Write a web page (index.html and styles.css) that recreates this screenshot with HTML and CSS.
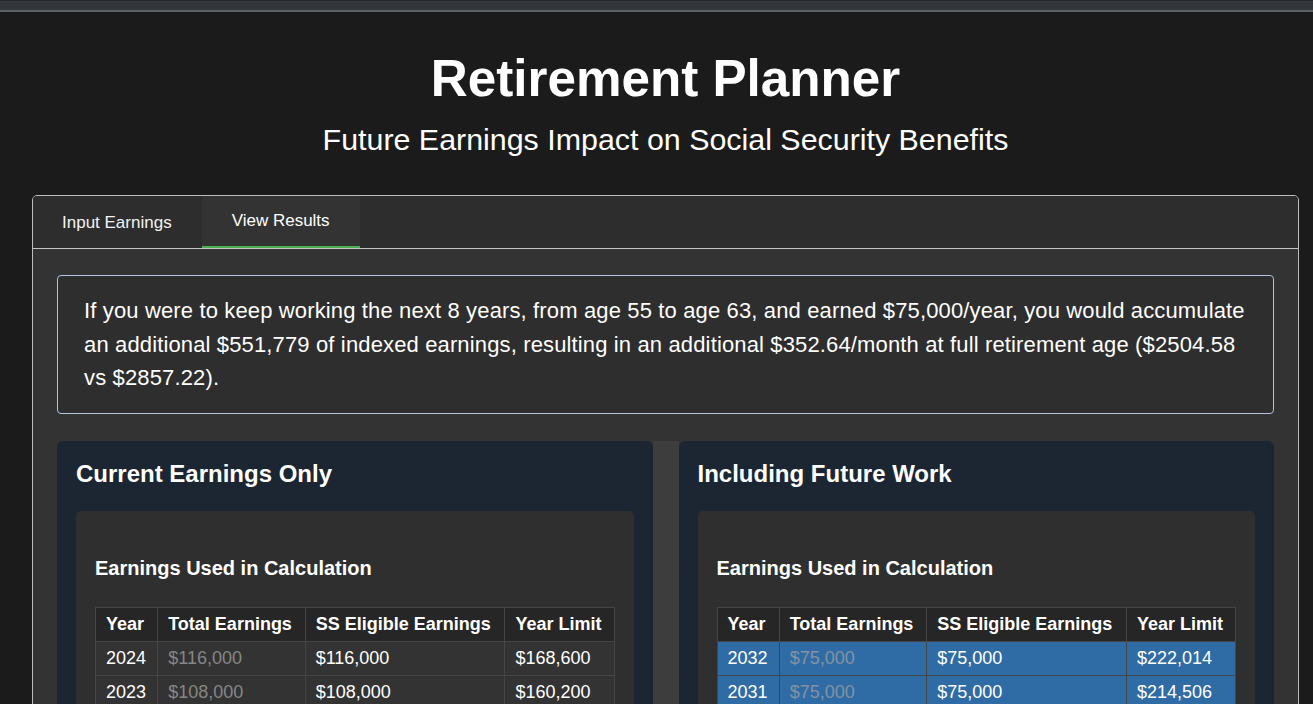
FILE: index.html
```html
<!DOCTYPE html>
<html lang="en">
<head>
<meta charset="utf-8">
<title>Retirement Planner</title>
<link rel="stylesheet" href="styles.css">
</head>
<body>
<div class="topbar"></div>
<main class="page">
  <h1 class="title">Retirement Planner</h1>
  <p class="subtitle">Future Earnings Impact on Social Security Benefits</p>

  <section class="panel">
    <nav class="tabs">
      <div class="tab">Input Earnings</div>
      <div class="tab active">View Results</div>
    </nav>
    <div class="panel-body">
      <div class="summary">If you were to keep working the next 8 years, from age 55 to age 63, and earned $75,000/year, you would accumulate an additional $551,779 of indexed earnings, resulting in an additional $352.64/month at full retirement age ($2504.58 vs $2857.22).</div>

      <div class="results">
        <div class="card">
          <h3 class="card-title">Current Earnings Only</h3>
          <div class="card-inner">
            <h4 class="section-title">Earnings Used in Calculation</h4>
            <table class="earnings">
              <thead>
                <tr><th>Year</th><th>Total Earnings</th><th>SS Eligible Earnings</th><th>Year Limit</th></tr>
              </thead>
              <tbody>
                <tr><td>2024</td><td class="muted">$116,000</td><td>$116,000</td><td>$168,600</td></tr>
                <tr><td>2023</td><td class="muted">$108,000</td><td>$108,000</td><td>$160,200</td></tr>
                <tr><td>2022</td><td class="muted">$102,000</td><td>$102,000</td><td>$147,000</td></tr>
                <tr><td>2021</td><td class="muted">$98,000</td><td>$98,000</td><td>$142,800</td></tr>
              </tbody>
            </table>
          </div>
        </div>
        <div class="divider"></div>
        <div class="card">
          <h3 class="card-title">Including Future Work</h3>
          <div class="card-inner">
            <h4 class="section-title">Earnings Used in Calculation</h4>
            <table class="earnings">
              <thead>
                <tr><th>Year</th><th>Total Earnings</th><th>SS Eligible Earnings</th><th>Year Limit</th></tr>
              </thead>
              <tbody>
                <tr class="future"><td>2032</td><td class="muted">$75,000</td><td>$75,000</td><td>$222,014</td></tr>
                <tr class="future"><td>2031</td><td class="muted">$75,000</td><td>$75,000</td><td>$214,506</td></tr>
                <tr class="future"><td>2030</td><td class="muted">$75,000</td><td>$75,000</td><td>$207,252</td></tr>
                <tr class="future"><td>2029</td><td class="muted">$75,000</td><td>$75,000</td><td>$200,243</td></tr>
              </tbody>
            </table>
          </div>
        </div>
      </div>
    </div>
  </section>
</main>
</body>
</html>
```

FILE: styles.css
```css
* { box-sizing: border-box; }

html, body {
  margin: 0;
  padding: 0;
  background: #1b1b1b;
  color: #ffffff;
  font-family: "Liberation Sans", Arial, sans-serif;
}

.topbar {
  height: 12px;
  background: #33373b;
  border-top: 1px solid #25282c;
  border-bottom: 2px solid #5d5f61;
}

.page {
  margin: 0 14px 0 32px;
  padding-bottom: 40px;
}

.title {
  margin: 37px 0 14px;
  font-size: 51.2px;
  line-height: 59px;
  font-weight: bold;
  text-align: center;
}

.subtitle {
  margin: 0 0 38px;
  font-size: 30.4px;
  line-height: 35px;
  text-align: center;
}

.panel {
  border: 1px solid #bdbdbd;
  border-radius: 5px;
  background: #333333;
  overflow: hidden;
}

.tabs {
  display: flex;
  height: 53px;
  background: #2d2d2d;
  border-bottom: 1px solid #c4c4c4;
}

.tab {
  display: flex;
  align-items: center;
  height: 52px;
  padding: 2px 30px 0 29px;
  font-size: 17px;
  color: #f2f2f2;
}

.tab.active {
  background: #333333;
  color: #ffffff;
  padding: 0 30px 0 30px;
  border-bottom: 2px solid #4caf50;
}

.panel-body {
  padding: 26px 24px 40px;
}

.summary {
  border: 1px solid #b3c3e0;
  border-radius: 4px;
  background: #2e2e2e;
  padding: 18px 20px 18px 26px;
  font-size: 22px;
  line-height: 33.5px;
  letter-spacing: 0.14px;
}

.results {
  display: grid;
  grid-template-columns: 1fr 26px 1fr;
  margin-top: 27px;
}

.divider {
  background: #3d3d3d;
}

.card {
  background: #1c2632;
  border-radius: 6px;
  padding: 19px 19px 30px;
}

.card-title {
  margin: 0;
  font-size: 24px;
  line-height: 28px;
  font-weight: bold;
}

.card-inner {
  margin-top: 23px;
  background: #2f2f2f;
  border-radius: 5px;
  padding: 19px 19px 24px;
}

.section-title {
  margin: 27px 0 27px;
  font-size: 20px;
  line-height: 23px;
  font-weight: bold;
}

.earnings {
  width: 100%;
  border-collapse: collapse;
  font-size: 18px;
  border: 1px solid #454545;
}

.earnings th,
.earnings td {
  border: 1px solid #454545;
  padding: 6px 10px;
  text-align: left;
  white-space: nowrap;
}

.earnings th {
  background: #262626;
  font-weight: bold;
  color: #ffffff;
}

.earnings td {
  background: #333333;
  color: #ffffff;
}

.earnings td.muted {
  color: #868686;
}

.earnings tr.future td {
  background: #2f6ca6;
}

.earnings tr.future td.muted {
  color: #8592a2;
}
```
